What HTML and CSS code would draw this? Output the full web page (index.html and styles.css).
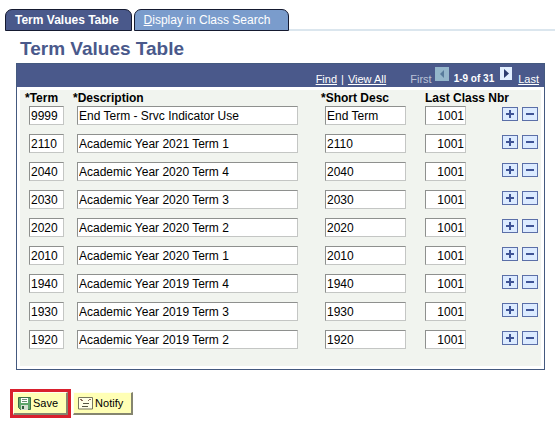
FILE: index.html
```html
<!DOCTYPE html>
<html lang="en">
  <head>
    <title>Term Values Table</title>
    <meta charset="UTF-8">
    <meta name="viewport" content="width=device-width, initial-scale=1">
    <link rel="stylesheet" href="styles.css">
  </head>
  <body>
    <nav class="tabs">
      <a class="tab tab-active" href="#values">Term Values Table</a>
      <a class="tab" href="#display"><u>D</u>isplay in Class Search</a>
      <span class="tab-line"></span>
    </nav>
    <h1>Term Values Table</h1>
    <div class="grid">
      <div class="grid-bar">
        <a href="#find">Find</a><span class="sep">|</span><a href="#all">View All</a>
        <span class="first">First</span>
        <svg class="arrow arrow-off" width="14" height="14" viewBox="0 0 14 14"><rect width="14" height="14" fill="#94b6cb"/><path d="M9 3v8L5 7z" fill="#587b9c"/></svg>
        <b class="count">1-9 of 31</b>
        <button class="arrow-btn" aria-label="Next"><svg class="arrow" width="12" height="13" viewBox="0 0 12 13"><rect width="12" height="13" fill="#e2efff"/><path d="M4 2v9l5-4.500z" fill="#2c3c70"/></svg></button>
        <a href="#last">Last</a>
      </div>
      <div class="grid-body">
        <table>
          <colgroup>
            <col class="col-term"><col><col class="col-short"><col class="col-last"><col class="col-btns">
          </colgroup>
          <thead>
            <tr>
              <th>*Term</th>
              <th>*Description</th>
              <th>*Short Desc</th>
              <th class="last" colspan="2">Last Class Nbr</th>
            </tr>
          </thead>
          <tbody id="rows"></tbody>
        </table>
      </div>
    </div>
    <div class="actions">
      <div class="highlight">
        <button class="action">
          <svg width="13" height="13" viewBox="0 0 13 13"><path d="M.5.5h12v12h-10l-2-2z" fill="#5fa56b" stroke="#3c6e48"/><path d="M3 1h7v5H3z" fill="#fff"/><path d="M4 2.500h5M4 4.500h5" stroke="#6d8f74"/><path d="M3 8h7v5H3z" fill="#d5dfd2"/><path d="M4 9h2v3H4z" fill="#2f5a3b"/></svg>
          Save
        </button>
      </div>
      <button class="action">
        <svg width="15" height="13" viewBox="0 0 15 13"><path d="M.5.5h14v11.500H.5z" fill="#ffffe6" stroke="#77775c"/><path d="M2 2.500h2M3 3.500h2M10 3.500h1M11 2.500h2" stroke="#8a6a5a"/><path d="M5 6.500h6M4 9.500h6" stroke="#55553f"/></svg>
        Notify
      </button>
    </div>
    <script>
      var terms = [
        ["9999", "End Term - Srvc Indicator Use", "End Term", "1001"],
        ["2110", "Academic Year 2021 Term 1", "2110", "1001"],
        ["2040", "Academic Year 2020 Term 4", "2040", "1001"],
        ["2030", "Academic Year 2020 Term 3", "2030", "1001"],
        ["2020", "Academic Year 2020 Term 2", "2020", "1001"],
        ["2010", "Academic Year 2020 Term 1", "2010", "1001"],
        ["1940", "Academic Year 2019 Term 4", "1940", "1001"],
        ["1930", "Academic Year 2019 Term 3", "1930", "1001"],
        ["1920", "Academic Year 2019 Term 2", "1920", "1001"]
      ];
      var names = ["Term", "Description", "Short Desc", "Last Class Nbr"];
      var classes = ["term", "desc", "short", "last"];
      var html = "";
      terms.forEach(function(row) {
        html += "<tr>";
        row.forEach(function(value, i) {
          html += '<td class="' + classes[i] + '"><input type="text" aria-label="' + names[i] + '" value="' + value + '"></td>';
        });
        html += '<td><div class="row-btns">' +
          '<button aria-label="Add row"><svg width="14" height="12" viewBox="0 0 14 12"><path d="M3 6h8M7 2v8" stroke="#3f5496" stroke-width="2"/></svg></button>' +
          '<button aria-label="Delete row"><svg width="14" height="12" viewBox="0 0 14 12"><path d="M3 6h8" stroke="#3f5496" stroke-width="2"/></svg></button>' +
          '</div></td></tr>';
      });
      document.getElementById("rows").innerHTML = html;
    </script>
  </body>
</html>
```
FILE: styles.css
```css
* {
	box-sizing: border-box;
}
body {
	margin: 0;
	padding-top: 9px;
	background-color: #fff;
	font-family: Arial, "Liberation Sans", sans-serif;
	font-size: 12px;
	color: #000;
}
button {
	font-family: inherit;
	padding: 0;
	cursor: pointer;
}
svg {
	display: block;
}
/* tabs */
.tabs {
	display: flex;
	gap: 2px;
	padding-left: 5px;
}
.tab {
	height: 22px;
	padding: 0 18px 0 9px;
	border: 1px solid #151a30;
	border-radius: 7px 7px 0 0;
	background-color: #7a9ccc;
	color: #fff;
	line-height: 20px;
	text-decoration: none;
	white-space: nowrap;
}
.tab-active {
	padding-right: 12px;
	background-color: #4a598b;
	font-weight: bold;
}
.tab-line {
	flex: 1;
	margin-left: -2px;
	border-bottom: 2px solid #dbe6ee;
}
h1 {
	margin: 7px 0 3px 20px;
	font-size: 19px;
	line-height: 22px;
	color: #4a598b;
}
/* grid */
.grid {
	margin: 0 10px 0 16px;
	border: 1px solid #44597f;
}
.grid-bar {
	display: flex;
	align-items: flex-end;
	justify-content: flex-end;
	height: 23px;
	padding-right: 5px;
	background-color: #4a598b;
	color: #fff;
	font-size: 11px;
	line-height: 16px;
}
.grid-bar a {
	color: #fff;
}
.sep {
	margin: 0 4px;
}
.first {
	margin-left: 24px;
	color: #bcc3d8;
}
.arrow-off {
	margin: 0 5px 6px 3px;
}
.count {
	font-size: 10px;
}
.arrow-btn {
	margin: 0 6px 7px;
	border: 0;
}
.grid-body {
	margin: 3px;
	padding: 0 0 8px 1px;
	background-color: #f1f4ef;
}
table {
	width: 100%;
	table-layout: fixed;
	border-collapse: collapse;
}
.col-term {
	width: 48px;
}
.col-short {
	width: 100px;
}
.col-last {
	width: 81px;
}
.col-btns {
	width: 43px;
}
th {
	height: 16px;
	padding: 0 0 0 4px;
	line-height: 14px;
	text-align: left;
	white-space: nowrap;
}
th.last {
	padding-left: 8px;
}
td {
	height: 28px;
	padding: 0;
	vertical-align: top;
}
td.term {
	padding: 0 5px 0 8px;
}
td.desc {
	padding: 0 19px 0 8px;
}
td.short {
	padding: 0 11px 0 8px;
}
td.last {
	padding: 0 32px 0 8px;
}
input[type="text"] {
	display: block;
	width: 100%;
	height: 19px;
	padding: 0 1px;
	border: 1px solid #c4c6c4;
	border-top-color: #8e908e;
	border-left-color: #8e908e;
	background-color: #fff;
	font-family: inherit;
	font-size: 12px;
}
.last input[type="text"] {
	text-align: right;
}
.row-btns {
	display: flex;
	gap: 4px;
	padding: 1px 0 0 4px;
}
.row-btns button {
	border: 1px solid #5b6fa8;
	background-color: #dcebff;
}
/* bottom buttons */
.actions {
	display: flex;
	align-items: center;
	gap: 2px;
	margin: 19px 0 0 10px;
}
.highlight {
	border: 3px solid #d9202e;
}
.action {
	display: flex;
	align-items: center;
	gap: 2px;
	height: 23px;
	padding: 0 8px 0 4px;
	border: 1px solid #fffff0;
	border-right: 2px solid #85856f;
	border-bottom: 2px solid #85856f;
	background-color: #ffffb5;
	font-size: 11px;
	color: #000;
}
```
